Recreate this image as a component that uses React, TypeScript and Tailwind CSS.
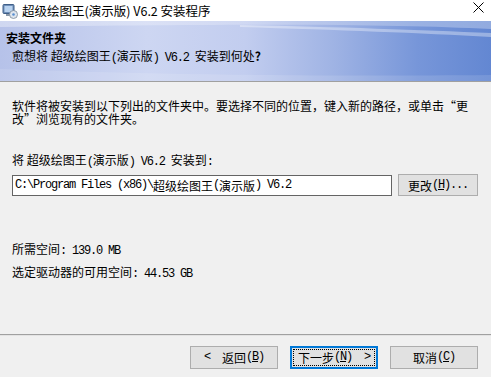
import React from "react"

const M = ({ children }: { children: React.ReactNode }) => (
    <span className="font-['Liberation_Mono',monospace] tracking-[-1.2px]">{children}</span>
)

const U = ({ children }: { children: React.ReactNode }) => (
    <span className="underline underline-offset-[1px]">{children}</span>
)

const AppIcon = () => (
    <svg width="16" height="16" viewBox="0 0 16 16">
        <rect x="1" y="1.5" width="11" height="9" rx="1" fill="#6f8fb8" stroke="#3f5f88" strokeWidth="1" />
        <rect x="2.5" y="3" width="8" height="6" fill="#b9d3f0" />
        <rect x="4" y="11" width="5" height="2" fill="#8a98a8" />
        <circle cx="11.5" cy="11.5" r="4" fill="#dfe6ee" stroke="#7c8a99" strokeWidth="0.8" />
        <circle cx="11.5" cy="11.5" r="1.3" fill="#5a8fd0" />
    </svg>
)

const Btn = ({ children, focused }: { children: React.ReactNode; focused?: boolean }) => (
    <div
        className={
            focused
                ? "w-[88px] h-[23px] bg-[#e1e1e1] border-2 border-[#0078d7] flex items-center justify-center p-[1px]"
                : "w-[88px] h-[23px] bg-[#e1e1e1] border border-[#adadad] flex items-center justify-center"
        }
    >
        {focused ? (
            <div className="w-full h-full border border-dotted border-black flex items-center justify-center">
                {children}
            </div>
        ) : (
            children
        )}
    </div>
)

export default function App() {
    return (
        <div className="w-[491px] h-[377px] bg-[#f0f0f0] flex flex-col overflow-hidden text-black text-[12px] leading-[13px] font-['Noto_Sans_CJK_SC',sans-serif]">
            {/* title bar */}
            <div className="h-[21px] bg-white flex items-center shrink-0">
                <div className="ml-[2px] mt-[1px]">
                    <AppIcon />
                </div>
                <div className="ml-[4px] text-[12.5px] leading-[14px]">超级绘图王(演示版) V6.2 安装程序</div>
                <svg className="ml-auto mr-[7px] mb-[6px]" width="11" height="11" viewBox="0 0 11 11">
                    <path d="M0.5 0.5 L10.5 10.5 M10.5 0.5 L0.5 10.5" stroke="#000" strokeWidth="1" />
                </svg>
            </div>

            {/* header banner */}
            <div className="relative h-[61px] shrink-0 border-b border-[#a0a0a0] bg-[linear-gradient(to_right,#b6c2e9_0%,#cdd6f2_30%,#c2cdef_50%,#9fb3e4_68%,#7796d9_85%,#6387d2_100%)] pl-[6px] pt-[10px]">
                <svg className="absolute left-0 top-0" width="491" height="60" viewBox="0 0 491 60">
                    <defs>
                        <linearGradient id="sh" x1="0" x2="1" y1="0" y2="0">
                            <stop offset="0" stopColor="#ffffff" stopOpacity="0.35" />
                            <stop offset="0.6" stopColor="#ffffff" stopOpacity="0.2" />
                            <stop offset="1" stopColor="#ffffff" stopOpacity="0.3" />
                        </linearGradient>
                    </defs>
                    <path d="M0 0 L491 0 L491 8 C400 4 300 2 0 6 Z" fill="url(#sh)" />
                    <path d="M240 4 C340 6 420 9 491 12 L491 16 C420 12 340 9 240 6 Z" fill="#ffffff" fillOpacity="0.35" />
                    <path d="M0 60 L0 48 C120 52 260 56 491 54 L491 60 Z" fill="#ffffff" fillOpacity="0.12" />
                </svg>
                <div className="relative font-bold">安装文件夹</div>
                <div className="relative mt-[5px] ml-[6px]">
                    愈想将 超级绘图王<M>(</M>演示版<M>) V6.2 </M>安装到何处<span className="font-bold">?</span>
                </div>
            </div>

            {/* body */}
            <div className="flex flex-col flex-1 px-[12px]">
                <div className="mt-[17px] w-[460px]">
                    软件将被安装到以下列出的文件夹中。要选择不同的位置，键入新的路径，或单击“更改”浏览现有的文件夹。
                </div>

                <div className="mt-[28px]">
                    将 超级绘图王<M>(</M>演示版<M>) V6.2 </M>安装到<M>:</M>
                </div>

                <div className="mt-[5px] flex items-center">
                    <div className="w-[380px] h-[21px] bg-white border border-[#646464] flex items-center pl-[2px]">
                        <M>C:\Program Files (x86)\</M>超级绘图王<M>(</M>演示版<M>) V6.2</M>
                    </div>
                    <div className="ml-[6px] w-[80px] h-[22px] bg-[#e1e1e1] border border-[#adadad] flex items-center justify-center">
                        更改<M>(<U>H</U>)...</M>
                    </div>
                </div>

                <div className="mt-[46px]">
                    所需空间<M>: 139.0 MB</M>
                </div>
                <div className="mt-[7px]">
                    选定驱动器的可用空间<M>: 44.53 GB</M>
                </div>
            </div>

            {/* footer */}
            <div className="shrink-0 border-t border-[#a0a0a0] h-[43px] flex flex-col">
                <div className="h-px bg-[#e3e3e3]" />
                <div className="flex justify-end gap-[12px] pr-[13px] mt-[10px]">
                    <Btn>
                        <M>&lt;&nbsp;&nbsp;</M>返回<M>(<U>B</U>)</M>
                    </Btn>
                    <Btn focused>
                        下一步<M>(<U>N</U>)&nbsp;&nbsp;&gt;</M>
                    </Btn>
                    <Btn>
                        取消<M>(<U>C</U>)</M>
                    </Btn>
                </div>
            </div>
        </div>
    )
}
